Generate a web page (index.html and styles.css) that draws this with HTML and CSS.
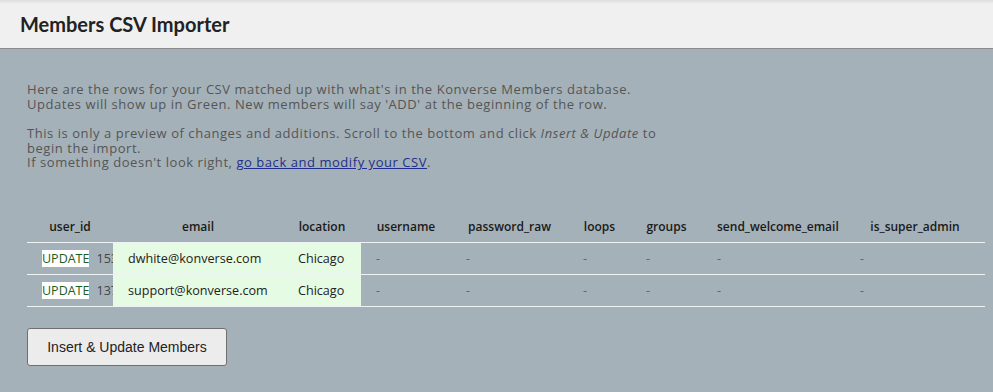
FILE: index.html
```html
<!DOCTYPE html>
<html lang="en">
<head>
    <meta charset="UTF-8">
    <title>Members CSV Importer</title>
    <link rel="stylesheet" href="styles.css">
</head>
<body>
    <div class="header">
        <h1>Members CSV Importer</h1>
    </div>
    <div class="content">
        <p>Here are the rows for your CSV matched up with what's in the Konverse Members database.<br>
        Updates will show up in Green. New members will say 'ADD' at the beginning of the row.</p>
        <p>This is only a preview of changes and additions. Scroll to the bottom and click <em>Insert &amp; Update</em> to<br>
        begin the import.<br>
        If something doesn't look right, <a href="#">go back and modify your CSV</a>.</p>

        <table class="preview">
            <colgroup>
                <col style="width:86px">
                <col style="width:170px">
                <col style="width:78px">
                <col style="width:90px">
                <col style="width:117px">
                <col style="width:63px">
                <col style="width:71px">
                <col style="width:143px">
                <col style="width:140px">
            </colgroup>
            <tr>
                <th>user_id</th>
                <th>email</th>
                <th>location</th>
                <th>username</th>
                <th>password_raw</th>
                <th>loops</th>
                <th>groups</th>
                <th>send_welcome_email</th>
                <th>is_super_admin</th>
            </tr>
            <tr>
                <td class="id"><div><span class="update">UPDATE</span><span class="num">1537</span></div></td>
                <td class="changed">dwhite@konverse.com</td>
                <td class="changed">Chicago</td>
                <td class="empty">-</td>
                <td class="empty">-</td>
                <td class="empty">-</td>
                <td class="empty">-</td>
                <td class="empty">-</td>
                <td class="empty">-</td>
            </tr>
            <tr>
                <td class="id"><div><span class="update">UPDATE</span><span class="num">1378</span></div></td>
                <td class="changed">support@konverse.com</td>
                <td class="changed">Chicago</td>
                <td class="empty">-</td>
                <td class="empty">-</td>
                <td class="empty">-</td>
                <td class="empty">-</td>
                <td class="empty">-</td>
                <td class="empty">-</td>
            </tr>
        </table>

        <button class="submit">Insert &amp; Update Members</button>
    </div>
</body>
</html>
```

FILE: styles.css
```css
/* Importer page */
body {
    font-family: "Open Sans", "Noto Sans", sans-serif;
    background-color: #a5b1b8;
    margin: 0;
    padding: 0;
}
.header {
    background: linear-gradient(#dcdcdc, #f0f0f0 4px);
    border-bottom: 1px solid #8a8a8a;
    height: 48px;
    padding: 0 20px;
    display: flex;
    align-items: center;
}
h1 {
    margin: 0;
    font-family: Lato, sans-serif;
    font-size: 20px;
    font-weight: 700;
    color: #222;
}
.content {
    padding: 33px 8px 20px 27px;
}
p {
    margin: 0 0 15px;
    font-size: 13px;
    letter-spacing: 0.55px;
    line-height: 14.6px;
    color: #555;
}
a {
    color: #1e2f8c;
}
.preview {
    table-layout: fixed;
    width: 958px;
    border-collapse: collapse;
    margin-top: 42px;
}
th {
    font-size: 12px;
    font-weight: 600;
    color: #1a1a1a;
    height: 30px;
    padding: 0 15px;
    text-align: center;
    white-space: nowrap;
    border-bottom: 1px solid #eef2f4;
}
td {
    height: 31px;
    padding: 0 15px;
    font-size: 12.6px;
    color: #222;
    white-space: nowrap;
    border-bottom: 1px solid #eef2f4;
}
td.id {
    padding-right: 0;
    color: #444;
}
td.id div {
    overflow: hidden;
}
.update {
    background-color: #fff;
    color: #1d5e1d;
    font-size: 12.5px;
}
.num {
    margin-left: 7px;
}
td.changed {
    background-color: #e6fbe3;
}
td.empty {
    color: #666;
}
.submit {
    margin-top: 21px;
    width: 200px;
    height: 38px;
    background-color: #ececec;
    border: 1px solid #6f6f6f;
    border-radius: 3px;
    font-family: "Liberation Sans", Arial, sans-serif;
    font-size: 14px;
    color: #222;
}
```
